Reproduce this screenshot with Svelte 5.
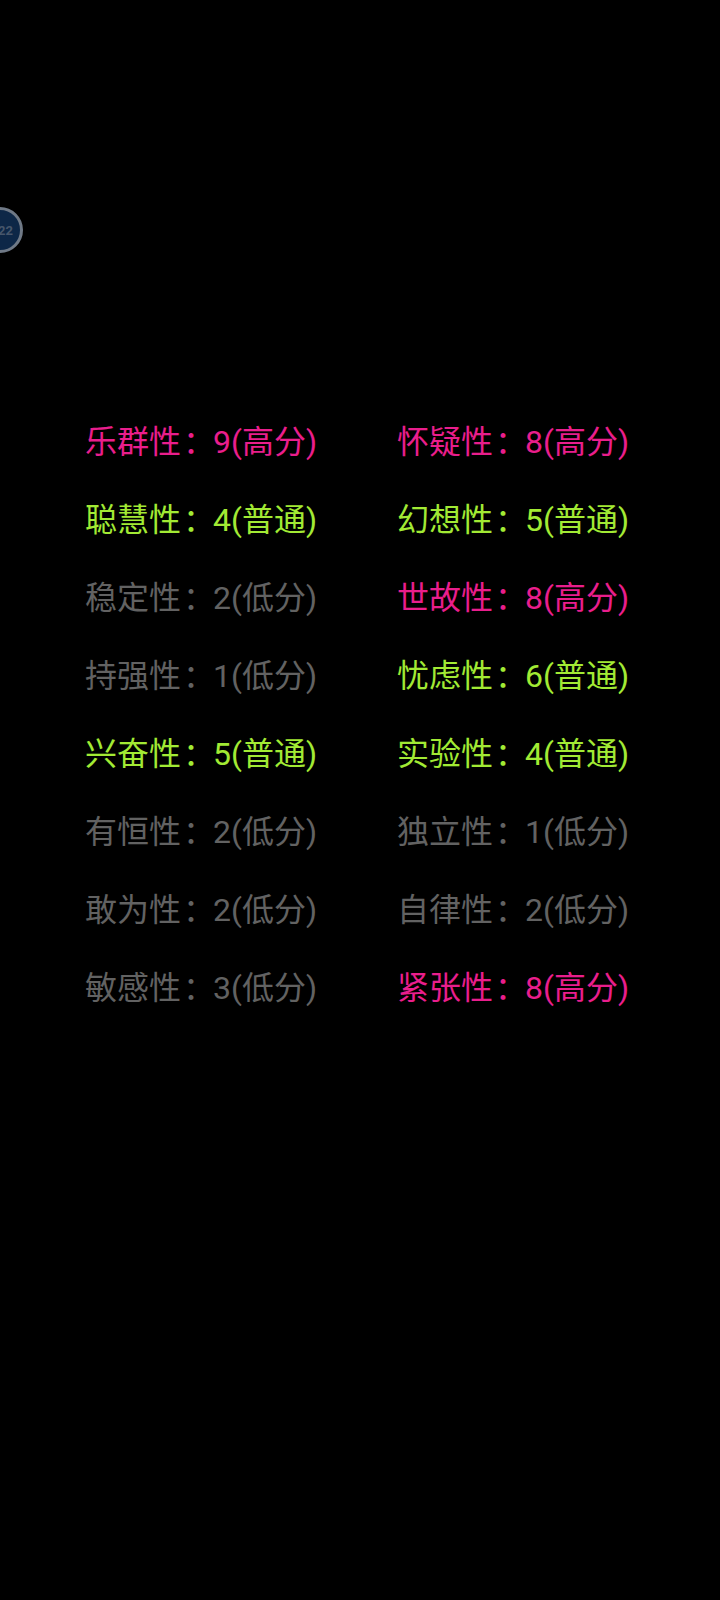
<script>
	const factors = [
		{ name: '乐群性', score: 9 },
		{ name: '怀疑性', score: 8 },
		{ name: '聪慧性', score: 4 },
		{ name: '幻想性', score: 5 },
		{ name: '稳定性', score: 2 },
		{ name: '世故性', score: 8 },
		{ name: '持强性', score: 1 },
		{ name: '忧虑性', score: 6 },
		{ name: '兴奋性', score: 5 },
		{ name: '实验性', score: 4 },
		{ name: '有恒性', score: 2 },
		{ name: '独立性', score: 1 },
		{ name: '敢为性', score: 2 },
		{ name: '自律性', score: 2 },
		{ name: '敏感性', score: 3 },
		{ name: '紧张性', score: 8 }
	];

	const level = (score) => (score >= 8 ? 'high' : score >= 4 ? 'mid' : 'low');
	const levelText = { high: '高分', mid: '普通', low: '低分' };
</script>

<div class="page">
	<div class="badge"><span>22</span></div>
	<div class="grid">
		{#each factors as f}
			<div class="factor {level(f.score)}">{f.name}<span class="colon">：</span>{f.score}({levelText[level(f.score)]})</div>
		{/each}
	</div>
</div>

<style>
	:global(body) {
		background-color: #000;
	}

	.page {
		position: relative;
		height: 1600px;
		padding-top: 403px;
		box-sizing: border-box;
		background-color: #000;
		font-family: 'Roboto', 'Noto Sans CJK SC', sans-serif;
		overflow: hidden;
	}

	.badge {
		position: absolute;
		left: -23px;
		top: 207px;
		width: 46px;
		height: 46px;
		box-sizing: border-box;
		border: 3px solid #6f7986;
		border-radius: 50%;
		background-color: #0d2747;
		color: #46566b;
		font-size: 13px;
		font-weight: 700;
		display: flex;
		align-items: center;
		justify-content: flex-end;
		padding-right: 7px;
	}

	.grid {
		display: grid;
		grid-template-columns: 312px 312px;
		grid-auto-rows: 78px;
		padding-left: 85px;
	}

	.factor {
		font-size: 32px;
		line-height: 78px;
		white-space: nowrap;
	}

	.colon {
		margin-left: 2px;
		letter-spacing: -2px;
	}

	.high {
		color: #e91e8c;
	}
	.mid {
		color: #a2ea34;
	}
	.low {
		color: #626262;
	}
</style>
